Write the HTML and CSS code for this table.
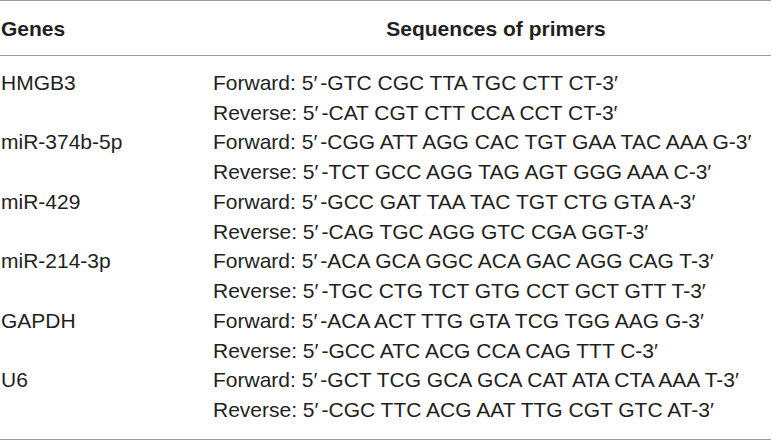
FILE: index.html
```html
<!DOCTYPE html>
<html lang="en">
<head>
<meta charset="utf-8">
<title>Primer sequences</title>
<link rel="stylesheet" href="styles.css">
</head>
<body>
<table class="primers">
  <thead>
    <tr><th class="gene">Genes</th><th class="seq">Sequences of primers</th></tr>
  </thead>
  <tbody>
    <tr><td class="gene">HMGB3</td><td class="seq"><div>Forward: 5<span class="pr">′</span>-GTC CGC TTA TGC CTT CT-3′</div><div>Reverse: 5<span class="pr">′</span>-CAT CGT CTT CCA CCT CT-3′</div></td></tr>
    <tr><td class="gene">miR-374b-5p</td><td class="seq"><div>Forward: 5<span class="pr">′</span>-CGG ATT AGG CAC TGT GAA TAC AAA G-3′</div><div>Reverse: 5<span class="pr">′</span>-TCT GCC AGG TAG AGT GGG AAA C-3′</div></td></tr>
    <tr><td class="gene">miR-429</td><td class="seq"><div>Forward: 5<span class="pr">′</span>-GCC GAT TAA TAC TGT CTG GTA A-3′</div><div>Reverse: 5<span class="pr">′</span>-CAG TGC AGG GTC CGA GGT-3′</div></td></tr>
    <tr><td class="gene">miR-214-3p</td><td class="seq"><div>Forward: 5<span class="pr">′</span>-ACA GCA GGC ACA GAC AGG CAG T-3′</div><div>Reverse: 5<span class="pr">′</span>-TGC CTG TCT GTG CCT GCT GTT T-3′</div></td></tr>
    <tr><td class="gene">GAPDH</td><td class="seq"><div>Forward: 5<span class="pr">′</span>-ACA ACT TTG GTA TCG TGG AAG G-3′</div><div>Reverse: 5<span class="pr">′</span>-GCC ATC ACG CCA CAG TTT C-3′</div></td></tr>
    <tr><td class="gene">U6</td><td class="seq"><div>Forward: 5<span class="pr">′</span>-GCT TCG GCA GCA CAT ATA CTA AAA T-3′</div><div>Reverse: 5<span class="pr">′</span>-CGC TTC ACG AAT TTG CGT GTC AT-3′</div></td></tr>
  </tbody>
</table>
</body>
</html>
```

FILE: styles.css
```css
html, body {
  margin: 0;
  padding: 0;
  background: #ffffff;
}

.primers {
  width: 771px;
  border-collapse: collapse;
  font-family: "Liberation Sans", Arial, sans-serif;
  font-size: 21px;
  line-height: 29.73px;
  color: #231f20;
  border-top: 1px solid #9a9a9a;
  border-bottom: 1px solid #9a9a9a;
}

.primers th,
.primers td {
  padding: 0;
  vertical-align: top;
  text-align: left;
  white-space: nowrap;
}

.primers thead th {
  font-weight: bold;
  padding-top: 13px;
  padding-bottom: 11px;
  line-height: 30px;
  border-bottom: 1px solid #9a9a9a;
}

.primers th.seq {
  text-align: center;
  padding-left: 8px;
}

.primers .gene {
  width: 212px;
  padding-left: 1px;
}

.primers .pr {
  margin-right: 3px;
}

.primers tbody tr:first-child td {
  padding-top: 12px;
}

.primers tbody tr:last-child td {
  padding-bottom: 14px;
}
```
